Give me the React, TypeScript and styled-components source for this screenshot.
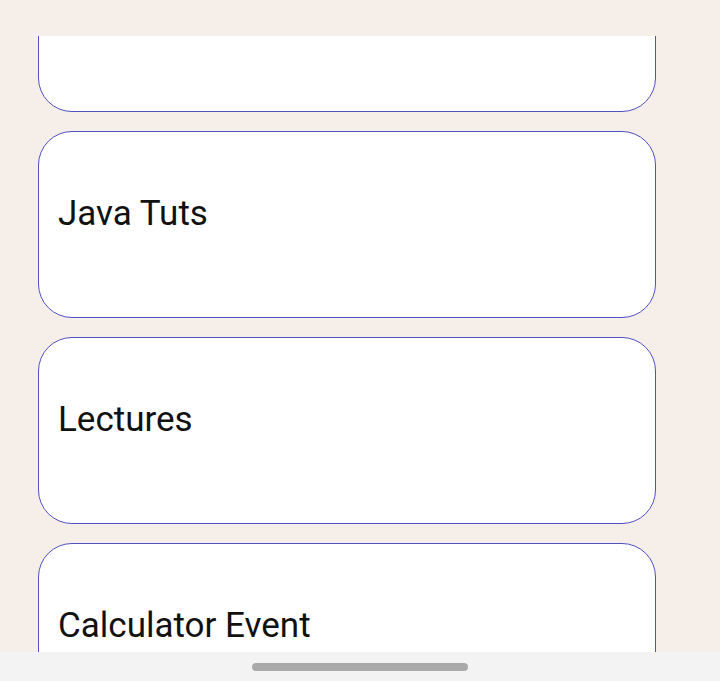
import React from "react";
import styled, { createGlobalStyle } from "styled-components";

const Global = createGlobalStyle`
  html, body { margin: 0; padding: 0; background: #f6efe9; }
  body { font-family: Roboto, "Liberation Sans", sans-serif; }
`;

const Screen = styled.div`
  width: 720px;
  height: 681px;
  display: flex;
  flex-direction: column;
  background: #f6efe9;
  overflow: hidden;
`;

const TopSpace = styled.div`
  height: 36px;
  flex: none;
`;

const Viewport = styled.div`
  flex: 1;
  overflow: hidden;
`;

const List = styled.div<{ $offset: number }>`
  display: flex;
  flex-direction: column;
  gap: 19px;
  padding: 0 64px 0 38px;
  margin-top: ${(p) => -p.$offset}px;
`;

const Card = styled.div`
  height: 187px;
  box-sizing: border-box;
  background: #ffffff;
  border: 1px solid #5050c4;
  border-radius: 34px;
  padding: 62px 19px 0 19px;
  flex: none;
`;

const Title = styled.div`
  font-family: Roboto, "Liberation Sans", sans-serif;
  font-size: 35px;
  line-height: 40px;
  color: #111111;
`;

const NavBar = styled.div`
  height: 29px;
  flex: none;
  background: #f3f3f3;
  display: flex;
  align-items: center;
  justify-content: center;
`;

const Handle = styled.div`
  width: 216px;
  height: 8px;
  border-radius: 4px;
  background: #a9a9a9;
`;

const items = ["", "Java Tuts", "Lectures", "Calculator Event"];

export default function App() {
  return (
    <Screen>
      <Global />
      <TopSpace />
      <Viewport>
        <List $offset={111}>
          {items.map((t, i) => (
            <Card key={i}>
              <Title>{t}</Title>
            </Card>
          ))}
        </List>
      </Viewport>
      <NavBar>
        <Handle />
      </NavBar>
    </Screen>
  );
}
